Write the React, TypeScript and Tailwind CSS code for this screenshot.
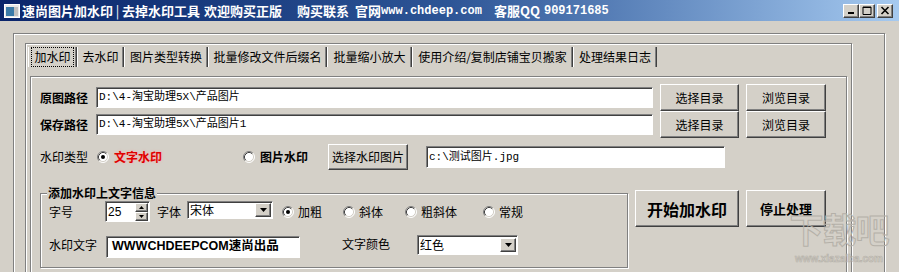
import React from "react";

// Win classic look helpers
const raised =
  "bg-[#d4d0c8] border border-white border-r-[#404040] border-b-[#404040] shadow-[inset_-1px_-1px_0_#808080]";
const sunken =
  "bg-white border border-[#808080] border-r-white border-b-white shadow-[inset_1px_1px_0_#404040]";
const etched = "border border-[#808080] shadow-[inset_1px_1px_0_#fff,1px_1px_0_#fff]";
const cjk = "font-['Noto_Sans_CJK_SC',sans-serif]";
const mono = "font-['Liberation_Mono','Noto_Sans_CJK_SC',monospace]";

const Radio: React.FC<{ checked?: boolean }> = ({ checked }) => (
  <svg width="12" height="12" viewBox="0 0 12 12" className="shrink-0">
    <circle cx="6" cy="6" r="5" fill="#fff" />
    <path d="M2.11 9.89 A5.5 5.5 0 0 1 9.89 2.11" fill="none" stroke="#808080" />
    <path d="M9.89 2.11 A5.5 5.5 0 0 1 2.11 9.89" fill="none" stroke="#fff" />
    <path d="M2.82 9.18 A4.5 4.5 0 0 1 9.18 2.82" fill="none" stroke="#404040" />
    <path d="M9.18 2.82 A4.5 4.5 0 0 1 2.82 9.18" fill="none" stroke="#d4d0c8" />
    {checked && <circle cx="6" cy="6" r="2" fill="#000" />}
  </svg>
);

const DownArrow = () => (
  <svg width="7" height="4" viewBox="0 0 7 4">
    <polygon points="0,0 7,0 3.5,4" fill="#000" />
  </svg>
);

const Select: React.FC<{ value: string; className: string }> = ({ value, className }) => (
  <div className={`${sunken} ${className} flex items-center`}>
    <span className="flex-1 pl-[2px] text-[12px] leading-none text-black">{value}</span>
    <div className={`${raised} w-[16px] h-[14px] mr-[1px] flex items-center justify-center`}>
      <DownArrow />
    </div>
  </div>
);

const tabs: [string, number][] = [
  ["加水印", 49],
  ["去水印", 47],
  ["图片类型转换", 84],
  ["批量修改文件后缀名", 119],
  ["批量缩小放大", 85],
  ["使用介绍/复制店铺宝贝搬家", 161],
  ["处理结果日志", 84],
];

const TitleButton: React.FC<{ kind: "min" | "max" | "close" }> = ({ kind }) => (
  <div className={`${raised} w-[16px] h-[14px] flex items-center justify-center`}>
    <svg width="10" height="9" viewBox="0 0 10 9">
      {kind === "min" && <rect x="2" y="6" width="6" height="2" fill="#000" />}
      {kind === "max" && (
        <path d="M1 1.5 H9 M1 1 V8.5 H9 V1 H1" fill="none" stroke="#000" strokeWidth="1" />
      )}
      {kind === "close" && (
        <path d="M1.5 1 L8.5 8 M8.5 1 L1.5 8" stroke="#000" strokeWidth="1.6" />
      )}
    </svg>
  </div>
);

export default function App() {
  return (
    <div className={`relative w-[899px] h-[272px] overflow-hidden bg-[#d4d0c8] text-black ${cjk}`}>
      {/* title bar */}
      <div className="h-[21px] flex items-center bg-linear-to-r from-[#0a246a] via-[#2d5596] to-[#a6caf0] text-white font-bold text-[13px] leading-none">
        <svg width="16" height="14" viewBox="0 0 16 14" className="ml-[4px]">
          <rect x="0.5" y="0.5" width="15" height="13" fill="#e8e8e8" stroke="#fff" />
          <rect x="2" y="3" width="8" height="9" fill="#3a7aa8" />
          <rect x="10" y="3" width="4" height="9" fill="#c0c0c0" />
        </svg>
        <span className="ml-[2px]">速尚图片加水印</span>
        <span className="w-[9px] text-center font-normal">|</span>
        <span>去掉水印工具</span>
        <span className="ml-[4px]">欢迎购买正版</span>
        <span className="ml-[15px]">购买联系</span>
        <span className="ml-[6px]">官网</span>
        <span className={`${mono} text-[12px]`}>www.chdeep.com</span>
        <span className="ml-[12px]">客服QQ</span>
        <span className={`${mono} text-[12px] ml-[4px]`}>909171685</span>
        <div className="ml-auto mr-[6px] flex items-center">
          <TitleButton kind="min" />
          <TitleButton kind="max" />
          <div className="ml-[2px]">
            <TitleButton kind="close" />
          </div>
        </div>
      </div>

      {/* window body */}
      <div className="pt-[12px] pl-[13px]">
        <div className={`${etched} w-[872px] h-[300px] pt-[9px] pl-[11px]`}>
          <div className={`${etched} w-[827px] h-[300px] pt-[3px] pl-[2px]`}>
            {/* tab strip */}
            <div className="flex h-[20px] text-[12px] leading-none">
              {tabs.map(([label, w], i) => (
                <div
                  key={label}
                  style={{ width: w }}
                  className="h-[20px] flex items-center justify-center border-l border-l-white border-r border-r-[#404040] shadow-[inset_-1px_0_0_#808080]"
                >
                  {i === 0 ? (
                    <span className="border border-dotted border-black px-[2px] py-[3px]">{label}</span>
                  ) : (
                    label
                  )}
                </div>
              ))}
            </div>

            {/* tab page */}
            <div className={`${etched} mt-[9px] ml-[2px] w-[817px] h-[300px] pt-[7px] pl-[9px]`}>
              {/* row 1 */}
              <div className="flex items-center h-[27px]">
                <span className="w-[48px] text-[12px] font-bold">原图路径</span>
                <div className={`${sunken} ml-[8px] w-[557px] h-[21px] flex items-center pl-[2px] ${mono} text-[11px]`}>
                  D:\4-淘宝助理5X\产品图片
                </div>
                <button className={`${raised} ml-[7px] w-[79px] h-[27px] text-[12px]`}>选择目录</button>
                <button className={`${raised} ml-[7px] w-[80px] h-[27px] text-[12px]`}>浏览目录</button>
              </div>
              {/* row 2 */}
              <div className="flex items-center h-[27px]">
                <span className="w-[48px] text-[12px] font-bold">保存路径</span>
                <div className={`${sunken} ml-[8px] w-[557px] h-[21px] flex items-center pl-[2px] ${mono} text-[11px]`}>
                  D:\4-淘宝助理5X\产品图片1
                </div>
                <button className={`${raised} ml-[7px] w-[79px] h-[27px] text-[12px]`}>选择目录</button>
                <button className={`${raised} ml-[7px] w-[80px] h-[27px] text-[12px]`}>浏览目录</button>
              </div>
              {/* row 3 */}
              <div className="flex items-center h-[26px] mt-[6px] text-[12px]">
                <span className="w-[48px]">水印类型</span>
                <span className="ml-[9px] flex">
                  <Radio checked />
                </span>
                <span className="ml-[5px] w-[48px] font-bold text-[#e00000] [text-shadow:0_0_3px_#f7a8a8]">文字水印</span>
                <span className="ml-[81px] flex">
                  <Radio />
                </span>
                <span className="ml-[5px] w-[48px] font-bold">图片水印</span>
                <button className={`${raised} ml-[20px] w-[80px] h-[26px] text-[12px]`}>选择水印图片</button>
                <div className={`${sunken} ml-[18px] w-[299px] h-[22px] flex items-center pl-[2px] ${mono} text-[11px]`}>
                  c:\测试图片.jpg
                </div>
              </div>

              {/* bottom area */}
              <div className="flex items-start mt-[20px]">
                <div className={`${etched} relative mt-[3px] w-[588px] h-[75px] pt-[7px] pl-[8px] text-[12px]`}>
                  <span className="absolute left-[6px] top-[-8px] px-[1px] bg-[#d4d0c8] font-bold leading-[14px]">
                    添加水印上文字信息
                  </span>
                  {/* row A */}
                  <div className="flex items-center h-[21px]">
                    <span className="w-[24px]">字号</span>
                    <div className={`${sunken} ml-[32px] w-[45px] h-[21px] flex items-center`}>
                      <span className="flex-1 pl-[2px] font-['Liberation_Sans',sans-serif] text-[12px]">25</span>
                      <div className="flex flex-col mr-[1px]">
                        <div className={`${raised} w-[13px] h-[9px] flex items-center justify-center`}>
                          <svg width="5" height="3" viewBox="0 0 5 3">
                            <polygon points="2.5,0 5,3 0,3" fill="#000" />
                          </svg>
                        </div>
                        <div className={`${raised} w-[13px] h-[9px] flex items-center justify-center`}>
                          <svg width="5" height="3" viewBox="0 0 5 3">
                            <polygon points="0,0 5,0 2.5,3" fill="#000" />
                          </svg>
                        </div>
                      </div>
                    </div>
                    <span className="ml-[7px] w-[24px]">字体</span>
                    <Select value="宋体" className="ml-[6px] w-[86px] h-[18px] self-start" />
                    <span className="ml-[9px] flex">
                      <Radio checked />
                    </span>
                    <span className="ml-[4px]">加粗</span>
                    <span className="ml-[21px] flex">
                      <Radio />
                    </span>
                    <span className="ml-[4px]">斜体</span>
                    <span className="ml-[22px] flex">
                      <Radio />
                    </span>
                    <span className="ml-[4px]">粗斜体</span>
                    <span className="ml-[26px] flex">
                      <Radio />
                    </span>
                    <span className="ml-[4px]">常规</span>
                  </div>
                  {/* row B */}
                  <div className="flex items-center h-[23px] mt-[13px]">
                    <span className="w-[48px] self-start mt-[1px]">水印文字</span>
                    <div className={`${sunken} ml-[9px] w-[194px] h-[22px] flex items-center pl-[5px] font-['Liberation_Sans','Noto_Sans_CJK_SC',sans-serif] font-bold text-[12.5px]`}>
                      WWWCHDEEPCOM速尚出品
                    </div>
                    <span className="ml-[42px] w-[48px] self-start">文字颜色</span>
                    <Select value="红色" className="ml-[27px] w-[101px] h-[20px] self-start" />
                  </div>
                </div>
                <button className={`${raised} ml-[7px] w-[104px] h-[37px] text-[16px] font-bold`}>开始加水印</button>
                <button className={`${raised} ml-[7px] w-[80px] h-[37px] text-[13px] font-bold`}>停止处理</button>
              </div>
            </div>
          </div>
        </div>
      </div>

      {/* faint site watermark over the corner */}
      <div className="absolute left-[784px] top-[212px] w-[110px] pointer-events-none flex flex-col items-center whitespace-nowrap">
        <span className="text-[34px] leading-none font-bold text-transparent [-webkit-text-stroke:1px_#b4b0a8] tracking-[-1px]">
          下载吧
        </span>
        <span className="font-['Liberation_Sans',sans-serif] text-[10px] leading-none font-bold text-transparent [-webkit-text-stroke:0.6px_#b4b0a8] mt-[8px]">
          www.xiazaiba.com
        </span>
      </div>
    </div>
  );
}
